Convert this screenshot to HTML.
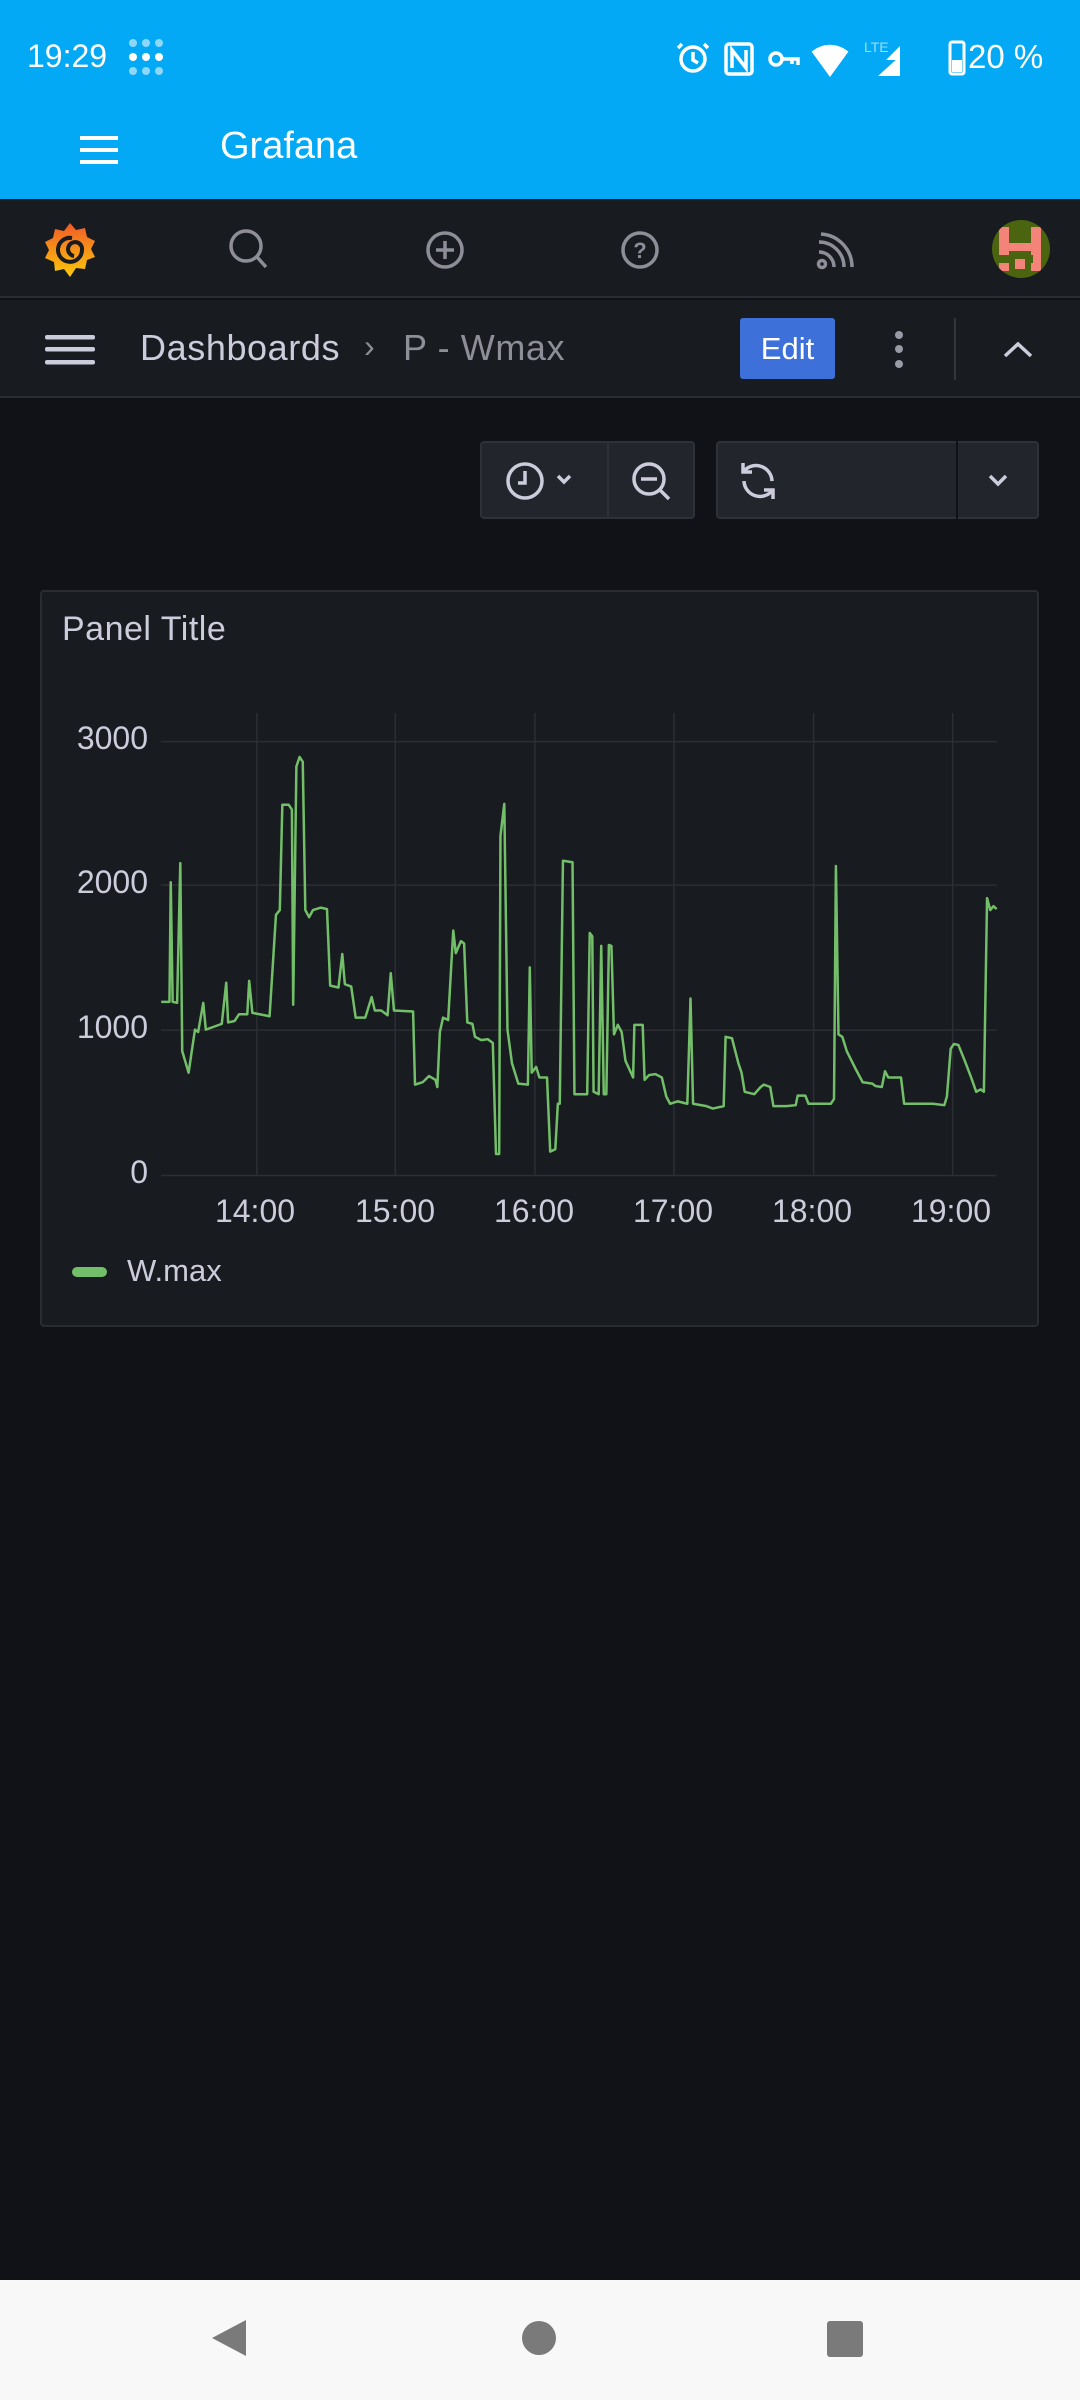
<!DOCTYPE html>
<html><head><meta charset="utf-8"><style>
*{margin:0;padding:0;box-sizing:border-box}
body{width:1080px;height:2400px;background:#111217;font-family:"Liberation Sans",sans-serif;position:relative;overflow:hidden}
.abs{position:absolute}
.t{color:#ccccdc}
</style></head><body>
<!-- status + app bar -->
<div class="abs" style="left:0;top:0;width:1080px;height:199px;background:#03A9F4"></div>
<div class="abs" style="left:27px;top:38px;color:#fff;font-size:32px">19:29</div>
<svg class="abs" style="left:128px;top:38px" width="40" height="40" viewBox="0 0 40 40" fill="#fff"><g opacity=".55"><circle cx="5" cy="5" r="4"/><circle cx="18" cy="5" r="4"/><circle cx="31" cy="5" r="4"/><circle cx="5" cy="33" r="4"/><circle cx="18" cy="33" r="4"/><circle cx="31" cy="33" r="4"/></g><circle cx="5" cy="19" r="4"/><circle cx="18" cy="19" r="4"/><circle cx="31" cy="19" r="4"/></svg>
<svg class="abs" style="left:674px;top:38px" width="300" height="40" viewBox="0 0 300 40" fill="none" stroke="#fff" stroke-width="3.5">
<circle cx="19" cy="21" r="12"/><path d="M19 14v8l5 3M8 6l-4 4M30 6l4 4"/>
<rect x="52" y="6" width="26" height="30" rx="3"/><path d="M58 30V12l14 18V12"/>
<circle cx="102" cy="21" r="6"/><path d="M108 21h16v6M118 21v5"/>
<path d="M140 14a26 26 0 0 1 32 0L156 36Z" fill="#fff"/>
<text x="190" y="14" font-size="14" fill="#fff" stroke="none" opacity=".6" font-family="Liberation Sans">LTE</text>
<path d="M212 22L226 8v14ZM204 38L226 18v20Z" fill="#fff" stroke="none"/>
<rect x="276" y="4" width="14" height="32" rx="2" stroke-width="3"/><rect x="278" y="22" width="10" height="12" fill="#fff" stroke="none"/></svg>
<div class="abs" style="left:968px;top:38px;color:#fff;font-size:33px">20 %</div>
<svg class="abs" style="left:80px;top:136px" width="38" height="28"><rect y="0" width="38" height="4" fill="#fff"/><rect y="12" width="38" height="4" fill="#fff"/><rect y="24" width="38" height="4" fill="#fff"/></svg>
<div class="abs" style="left:220px;top:125px;color:#fff;font-size:38px">Grafana</div>

<!-- grafana top bar -->
<div class="abs" style="left:0;top:199px;width:1080px;height:99px;background:#181b1f;border-bottom:2px solid #2a2c31"></div>
<svg class="abs" style="left:42px;top:220px" width="56" height="60" viewBox="0 0 56 60"><defs><linearGradient id="g" x1="0" y1="0" x2="0" y2="1"><stop offset="0" stop-color="#f05a28"/><stop offset="1" stop-color="#fbca0a"/></linearGradient></defs><path d="M28 3l6 7 9-2 2 9 8 4-4 8 4 8-8 3-2 9-9-1-6 9-6-8-9 2-1-9-9-4 4-8-4-8 8-4 2-9 9 2Z" fill="url(#g)"/><path d="M30 18a12 12 0 1 0 10 12a7 7 0 1 0-8 6" fill="none" stroke="#181b1f" stroke-width="4"/></svg>
<svg class="abs" style="left:226px;top:226px" width="46" height="46" fill="none" stroke="#8e8e99" stroke-width="3.5"><circle cx="20" cy="20" r="15"/><path d="M31 31l9 10"/></svg>
<svg class="abs" style="left:424px;top:229px" width="42" height="42" fill="none" stroke="#8e8e99" stroke-width="3.5"><circle cx="21" cy="21" r="17"/><path d="M21 12v18M12 21h18"/></svg>
<svg class="abs" style="left:619px;top:229px" width="42" height="42" fill="none" stroke="#8e8e99" stroke-width="3.5"><circle cx="21" cy="21" r="17"/><text x="21" y="29" font-size="22" text-anchor="middle" fill="#8e8e99" stroke="none" font-family="Liberation Sans" font-weight="bold">?</text></svg>
<svg class="abs" style="left:814px;top:232px" width="40" height="40" fill="none" stroke="#8e8e99" stroke-width="3.5"><circle cx="8" cy="32" r="3.5"/><path d="M5 20a15 15 0 0 1 15 15M5 10a25 25 0 0 1 25 25M7 2a33 33 0 0 1 31 33"/></svg>
<svg class="abs" style="left:991px;top:219px" width="60" height="60" viewBox="0 0 60 60"><clipPath id="c"><circle cx="30" cy="30" r="29"/></clipPath><g clip-path="url(#c)"><rect width="60" height="60" fill="#4a6410"/><rect x="8" y="8" width="10" height="44" fill="#f4847a"/><rect x="40" y="8" width="10" height="44" fill="#f4847a"/><rect x="18" y="24" width="22" height="8" fill="#f4847a"/><rect x="8" y="36" width="14" height="8" fill="#4a6410"/><rect x="24" y="40" width="10" height="10" fill="#f4847a"/><rect x="36" y="36" width="6" height="8" fill="#4a6410"/></g></svg>

<!-- breadcrumb bar -->
<div class="abs" style="left:0;top:300px;width:1080px;height:98px;background:#181b1f;border-bottom:2px solid #2a2c31"></div>
<svg class="abs" style="left:45px;top:335px" width="50" height="30"><rect y="0" width="50" height="4.5" rx="2" fill="#ccccdc"/><rect y="12" width="50" height="4.5" rx="2" fill="#ccccdc"/><rect y="25" width="50" height="4.5" rx="2" fill="#ccccdc"/></svg>
<div class="abs t" style="left:140px;top:327px;font-size:36px;letter-spacing:0.6px">Dashboards</div>
<div class="abs" style="left:364px;top:328px;font-size:32px;color:#8e8e99">›</div>
<div class="abs" style="left:403px;top:327px;font-size:36px;color:#8e8e99;letter-spacing:0.6px">P - Wmax</div>
<div class="abs" style="left:740px;top:318px;width:95px;height:61px;background:#3d71d9;border-radius:3px;color:#fff;font-size:31px;text-align:center;line-height:61px">Edit</div>
<svg class="abs" style="left:892px;top:330px" width="14" height="40" fill="#9a9aa6"><circle cx="7" cy="5" r="4"/><circle cx="7" cy="19" r="4"/><circle cx="7" cy="34" r="4"/></svg>
<div class="abs" style="left:954px;top:318px;width:2px;height:62px;background:#34363c"></div>
<svg class="abs" style="left:1003px;top:340px" width="30" height="20" fill="none" stroke="#ccccdc" stroke-width="3.5"><path d="M2 16L15 4l13 12"/></svg>

<!-- time controls -->
<div class="abs" style="left:480px;top:441px;width:215px;height:78px;background:#22252b;border:2px solid #2f3138;border-radius:4px"></div>
<div class="abs" style="left:607px;top:441px;width:2px;height:78px;background:#2f3138"></div>
<svg class="abs" style="left:500px;top:460px" width="90" height="40" fill="none" stroke="#ccccdc" stroke-width="3.5"><circle cx="25" cy="21" r="17"/><path d="M25 11v12h-7"/><path d="M58 16l6 6 6-6"/></svg>
<svg class="abs" style="left:630px;top:460px" width="44" height="44" fill="none" stroke="#ccccdc" stroke-width="3.5"><circle cx="19" cy="19" r="15"/><path d="M11 19h16M30 30l9 9"/></svg>
<div class="abs" style="left:716px;top:441px;width:323px;height:78px;background:#22252b;border:2px solid #2f3138;border-radius:4px"></div>
<div class="abs" style="left:956px;top:441px;width:2px;height:78px;background:#111217"></div>
<svg class="abs" style="left:738px;top:461px" width="40" height="40" fill="none" stroke="#ccccdc" stroke-width="3.5"><path d="M6 10a16 16 0 0 1 28 10"/><path d="M5 2v9h9"/><path d="M34 30a16 16 0 0 1-28-10"/><path d="M35 38v-9h-9"/></svg>
<svg class="abs" style="left:987px;top:472px" width="22" height="16" fill="none" stroke="#ccccdc" stroke-width="3.5"><path d="M3 4l8 8 8-8"/></svg>

<!-- panel -->
<div class="abs" style="left:40px;top:590px;width:999px;height:737px;background:#181b1f;border:2px solid #2a2c31;border-radius:4px"></div>
<div class="abs t" style="left:62px;top:610px;font-size:34px;letter-spacing:0.5px">Panel Title</div>
<svg class="abs" style="left:40px;top:580px" width="1000" height="750" viewBox="0 0 1568 1568" preserveAspectRatio="none">
<g stroke="#2c2e33" stroke-width="1.5" fill="none">
<path vector-effect="non-scaling-stroke" d="M190 338H1500M190 638H1500M190 941H1500M190 1245H1500M340 278V1245M557 278V1245M776 278V1245M994 278V1245M1213 278V1245M1431 278V1245"/></g>
<polyline vector-effect="non-scaling-stroke" fill="none" stroke="#73bf69" stroke-width="2.5" stroke-linejoin="round" points="190,882 203,882 205,632 208,882 215,884 220,592 223,985 233,1030 243,940 248,945 256,884 260,940 285,928 292,842 295,925 305,922 312,908 325,908 328,838 333,905 360,912 370,700 376,690 380,470 390,470 395,480 397,888 402,390 407,370 412,380 416,690 422,705 428,690 440,685 450,688 455,848 468,852 474,782 478,845 488,850 495,915 510,915 520,872 525,900 535,900 545,910 550,822 555,900 585,902 588,1055 600,1050 610,1037 620,1045 623,1060 627,945 632,915 640,920 648,733 652,780 660,755 665,760 670,925 678,928 682,955 692,962 702,960 710,968 715,1200 720,1200 722,535 728,468 733,940 740,1010 750,1053 765,1055 768,810 771,1030 778,1018 783,1040 795,1040 800,1195 808,1190 812,1095 815,1095 820,587 835,590 838,1075 858,1075 862,738 866,745 868,1070 876,1075 880,765 884,1075 888,1075 892,763 896,765 900,950 906,930 912,945 918,1005 930,1040 932,930 945,930 948,1045 955,1035 965,1033 975,1040 982,1080 988,1095 1000,1090 1015,1095 1020,875 1024,1095 1045,1100 1055,1105 1072,1100 1075,955 1085,958 1095,1010 1100,1030 1105,1070 1120,1075 1130,1060 1135,1055 1145,1060 1150,1100 1170,1100 1185,1098 1188,1078 1200,1078 1205,1095 1240,1095 1245,1085 1248,598 1252,950 1258,955 1265,985 1280,1025 1290,1050 1305,1053 1310,1058 1320,1060 1325,1027 1330,1040 1350,1040 1355,1095 1400,1095 1418,1098 1422,1080 1428,980 1433,970 1440,972 1450,1005 1460,1040 1468,1070 1475,1065 1480,1070 1485,665 1490,690 1495,682 1500,688"/>
</svg>
<div class="abs t" style="left:40px;top:720px;width:108px;text-align:right;font-size:32px">3000</div>
<div class="abs t" style="left:40px;top:864px;width:108px;text-align:right;font-size:32px">2000</div>
<div class="abs t" style="left:40px;top:1009px;width:108px;text-align:right;font-size:32px">1000</div>
<div class="abs t" style="left:40px;top:1154px;width:108px;text-align:right;font-size:32px">0</div>
<div class="abs t" style="left:195px;top:1193px;width:120px;text-align:center;font-size:32px">14:00</div>
<div class="abs t" style="left:335px;top:1193px;width:120px;text-align:center;font-size:32px">15:00</div>
<div class="abs t" style="left:474px;top:1193px;width:120px;text-align:center;font-size:32px">16:00</div>
<div class="abs t" style="left:613px;top:1193px;width:120px;text-align:center;font-size:32px">17:00</div>
<div class="abs t" style="left:752px;top:1193px;width:120px;text-align:center;font-size:32px">18:00</div>
<div class="abs t" style="left:891px;top:1193px;width:120px;text-align:center;font-size:32px">19:00</div>
<div class="abs" style="left:72px;top:1267px;width:35px;height:10px;border-radius:5px;background:#73bf69"></div>
<div class="abs t" style="left:127px;top:1253px;font-size:31px">W.max</div>

<!-- nav bar -->
<div class="abs" style="left:0;top:2280px;width:1080px;height:120px;background:#f8f8f8"></div>
<svg class="abs" style="left:208px;top:2318px" width="40" height="40"><path d="M38 2V38L4 20Z" fill="#7a7a7a"/></svg>
<svg class="abs" style="left:521px;top:2320px" width="36" height="36"><circle cx="18" cy="18" r="17" fill="#7a7a7a"/></svg>
<svg class="abs" style="left:826px;top:2320px" width="38" height="38"><rect x="1" y="1" width="36" height="36" rx="3" fill="#7a7a7a"/></svg>
</body></html>
